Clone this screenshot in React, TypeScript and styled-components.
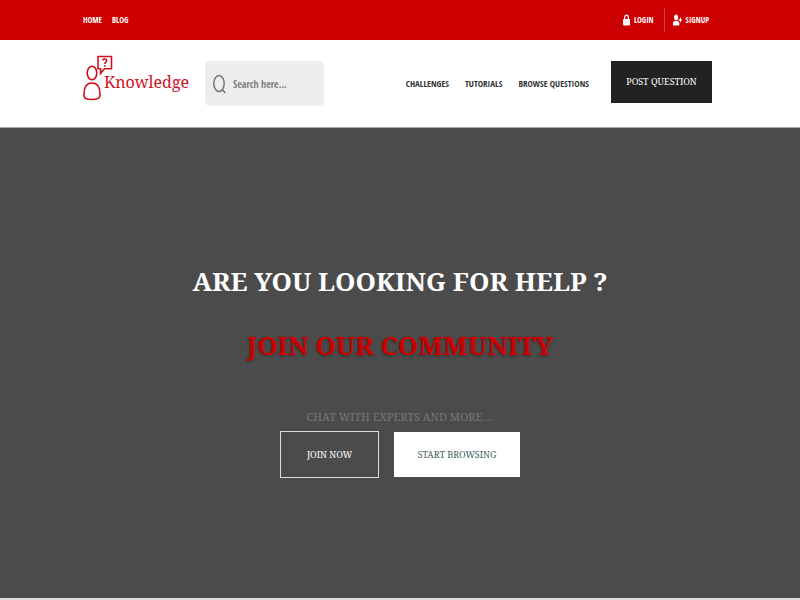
import React from "react";
import styled, { createGlobalStyle } from "styled-components";

const sans = `"Open Sans Condensed", "Roboto Condensed", "Open Sans", sans-serif`;
const serif = `"Noto Serif", "Liberation Serif", serif`;

const GlobalStyle = createGlobalStyle`
  *, *::before, *::after { box-sizing: border-box; }
  body { margin: 0; background: #fff; font-family: ${sans}; }
  h1, p { margin: 0; }
  a { color: inherit; text-decoration: none; }
`;

const Page = styled.div`
  min-height: 100vh;
  display: flex;
  flex-direction: column;
`;

const TopBar = styled.div`
  display: flex;
  align-items: center;
  justify-content: space-between;
  min-height: 40px;
  padding: 0 91px 0 83px;
  background: #cc0000;
  color: #fff;
  font-size: 8px;
  line-height: 24px;
`;

const TopLinks = styled.nav`
  display: flex;
  gap: 10px;
`;

const Account = styled.nav`
  display: flex;
  align-items: center;
`;

const AccountLink = styled.a`
  display: flex;
  align-items: center;
  gap: 4px;

  & + & {
    margin-left: 10px;
    padding-left: 8px;
    border-left: 1px solid #d93838;
  }
`;

const Header = styled.header`
  display: flex;
  align-items: center;
  min-height: 88px;
  padding: 0 88px 0 83px;
  border-bottom: 1px solid #a9a9a9;
`;

const Logo = styled.a`
  display: flex;
  align-items: center;
  color: #d0101f;
  font-family: ${serif};
  font-size: 16px;
  line-height: 46px;
`;

const LogoArt = styled.svg`
  margin-right: -9px;
  margin-bottom: 12px;
`;

const LogoName = styled.span`
  margin-bottom: 4px;
`;

const Search = styled.label`
  display: flex;
  align-items: center;
  gap: 7px;
  width: 119px;
  height: 45px;
  margin-left: 16px;
  padding: 0 8px;
  border-radius: 5px;
  background: #ededed;
  color: #757575;
`;

const SearchInput = styled.input`
  flex: 1;
  min-width: 0;
  padding: 0;
  border: 0;
  outline: 0;
  background: transparent;
  font-family: ${sans};
  font-size: 10px;
  color: #757575;

  &::placeholder { color: #808080; opacity: 1; }
`;

const MainNav = styled.nav`
  display: flex;
  gap: 16px;
  margin-left: auto;
  color: #333;
  font-size: 9px;
  white-space: nowrap;
`;

const looks = {
  dark: { width: 101, height: 42, background: "#222", color: "#fff", border: "0" },
  outline: { width: 99, height: 47, background: "transparent", color: "#fff", border: "1px solid #ddd" },
  light: { width: 126, height: 45, background: "#fff", color: "#3d5f5c", border: "0" },
};

const Button = styled.button<{ $kind: keyof typeof looks }>`
  flex-shrink: 0;
  padding: 0;
  width: ${(p) => looks[p.$kind].width}px;
  height: ${(p) => looks[p.$kind].height}px;
  border: ${(p) => looks[p.$kind].border};
  background: ${(p) => looks[p.$kind].background};
  color: ${(p) => looks[p.$kind].color};
  font-family: ${serif};
  font-size: 9px;
  white-space: nowrap;
  cursor: pointer;
`;

const PostButton = styled(Button)`
  margin: 0 0 4px 22px;
`;

const Hero = styled.main`
  flex: 1;
  display: flex;
  flex-direction: column;
  align-items: center;
  padding: 121px 20px 112px;
  border-bottom: 2px solid #e2dfdf;
  background: #4b4b4b;
  font-family: ${serif};
  text-align: center;
`;

const Title = styled.h1`
  color: #fff;
  font-size: 26px;
  font-weight: 700;
  line-height: 64px;
`;

const Accent = styled.span`
  display: block;
  color: #cc0000;
  text-shadow: 0 1px 3px rgba(0, 0, 0, 0.35);
`;

const Tagline = styled.p`
  margin-top: 28px;
  color: #777;
  font-size: 11px;
  line-height: 24px;
`;

const Actions = styled.div`
  display: flex;
  align-items: center;
  gap: 15px;
  margin-top: 2px;
`;

export default function App() {
  return (
    <Page>
      <GlobalStyle />
      <TopBar>
        <TopLinks aria-label="Site">
          <a href="#home">HOME</a>
          <a href="#blog">BLOG</a>
        </TopLinks>
        <Account aria-label="Account">
          <AccountLink href="#login">
            <svg width="7" height="12" viewBox="0 0 7 12" fill="none" aria-hidden="true">
              <path d="M1.6 6V3.400a1.900 2.300 0 0 1 3.800 0V6" stroke="#fff" strokeWidth="1.2" />
              <rect y="5" width="7" height="6.500" rx="0.800" fill="#fff" />
            </svg>
            LOGIN
          </AccountLink>
          <AccountLink href="#signup">
            <svg width="9" height="12" viewBox="0 0 9 12" fill="#fff" aria-hidden="true">
              <ellipse cx="3.100" cy="3.400" rx="2" ry="2.900" />
              <path d="M0 11.500V9.500C0 7.700.8 6.900 2 6.900h2.300c1.200 0 2 .8 2 2.600v2z" />
              <path d="M6.900 3.500h.9v1.800H9v1.200H7.800v1.800h-.9V6.500H5.700V5.300h1.200z" />
            </svg>
            SIGNUP
          </AccountLink>
        </Account>
      </TopBar>

      <Header>
        <Logo href="#home">
          <LogoArt width="30" height="46" viewBox="0 0 30 46" fill="none" stroke="#d0101f" strokeWidth="1.6" aria-hidden="true">
            <ellipse cx="9" cy="18" rx="4.800" ry="6.800" />
            <path d="M1 40.500C.7 32 3.400 28 9 28s8.300 4 8 12.500C17 43 15 44.500 9 44.500S1 43 1 40.500z" />
            <path d="M15 1.500h13.500v12.300H21.500L17.600 18.500v-4.700H15z" />
            <path d="M19.800 5.400c0-2 3.900-2 3.900.3 0 1.500-1.900 1.500-1.900 3.400M21.800 10.200v1.500" />
          </LogoArt>
          <LogoName>Knowledge</LogoName>
        </Logo>
        <Search>
          <svg width="13" height="20" viewBox="0 0 13 20" fill="none" stroke="currentColor" strokeWidth="1.500" aria-hidden="true">
            <ellipse cx="6" cy="9.500" rx="5.200" ry="8" />
            <path d="M9.300 15.500L12.300 19" />
          </svg>
          <SearchInput type="search" aria-label="Search" placeholder="Search here..." />
        </Search>
        <MainNav aria-label="Main">
          <a href="#challenges">CHALLENGES</a>
          <a href="#tutorials">TUTORIALS</a>
          <a href="#questions">BROWSE QUESTIONS</a>
        </MainNav>
        <PostButton type="button" $kind="dark">POST QUESTION</PostButton>
      </Header>

      <Hero>
        <Title>
          ARE YOU LOOKING FOR HELP ?
          <Accent>JOIN OUR COMMUNITY</Accent>
        </Title>
        <Tagline>CHAT WITH EXPERTS AND MORE....</Tagline>
        <Actions>
          <Button type="button" $kind="outline">JOIN NOW</Button>
          <Button type="button" $kind="light">START BROWSING</Button>
        </Actions>
      </Hero>
    </Page>
  );
}
